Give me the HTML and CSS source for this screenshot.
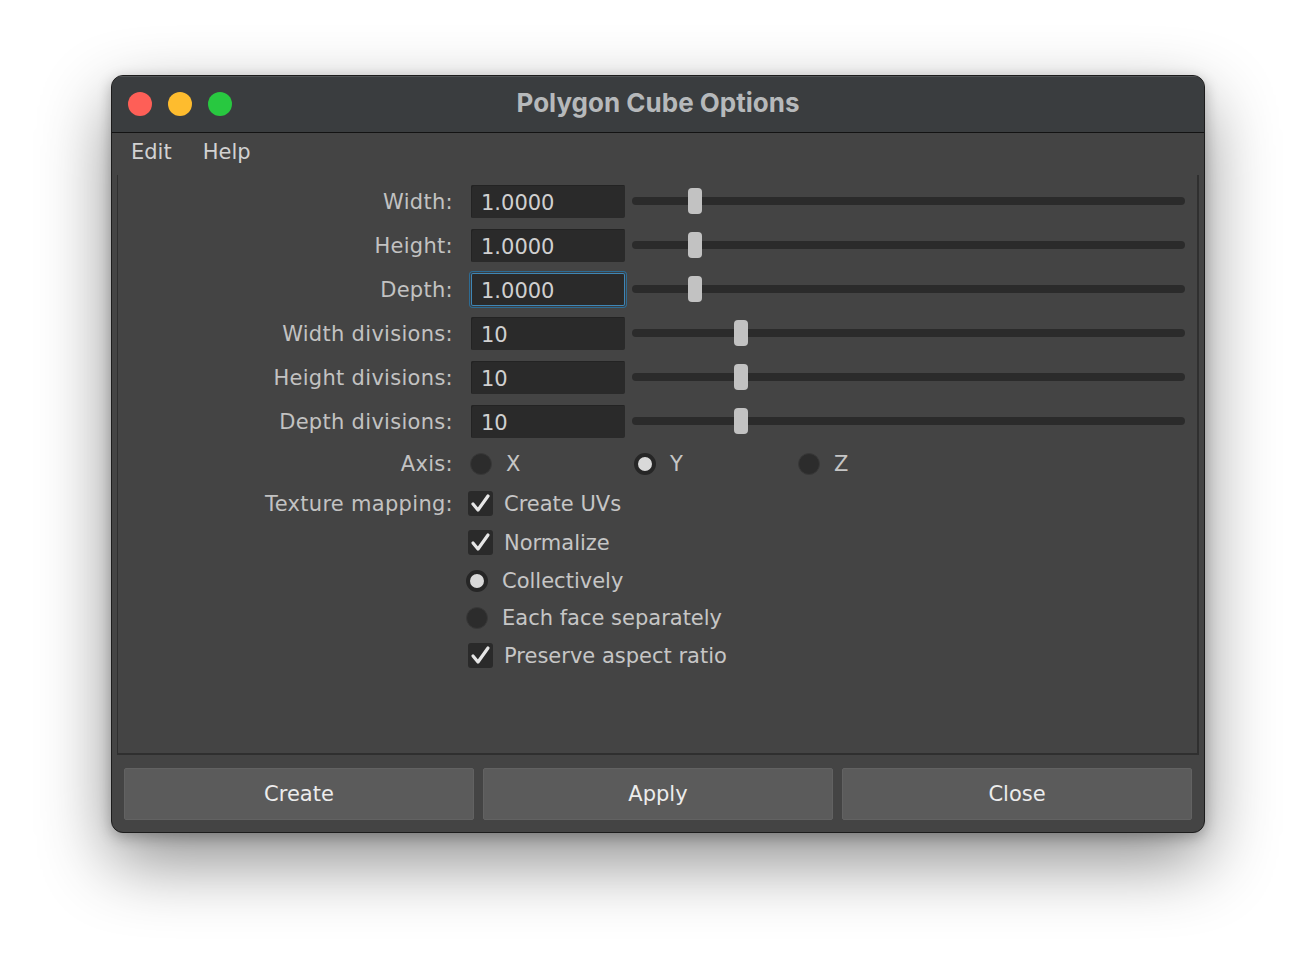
FILE: index.html
```html
<!DOCTYPE html>
<html>
<head>
<meta charset="utf-8">
<title>Polygon Cube Options</title>
<link rel="stylesheet" href="styles.css">
</head>
<body>
<div class="window">
  <div class="titlebar">
    <div class="lights">
      <span class="light red"></span>
      <span class="light yellow"></span>
      <span class="light green"></span>
    </div>
    <div class="title">Polygon Cube Options</div>
  </div>
  <div class="menubar">
    <span class="menu-item">Edit</span>
    <span class="menu-item">Help</span>
  </div>
  <div class="frame">
    <div class="row num-row">
      <div class="label">Width:</div>
      <div class="field">1.0000</div>
      <div class="slider"><div class="handle" style="left:56px"></div></div>
    </div>
    <div class="row num-row">
      <div class="label">Height:</div>
      <div class="field">1.0000</div>
      <div class="slider"><div class="handle" style="left:56px"></div></div>
    </div>
    <div class="row num-row">
      <div class="label">Depth:</div>
      <div class="field focused">1.0000</div>
      <div class="slider"><div class="handle" style="left:56px"></div></div>
    </div>
    <div class="row num-row">
      <div class="label">Width divisions:</div>
      <div class="field">10</div>
      <div class="slider"><div class="handle" style="left:102px"></div></div>
    </div>
    <div class="row num-row">
      <div class="label">Height divisions:</div>
      <div class="field">10</div>
      <div class="slider"><div class="handle" style="left:102px"></div></div>
    </div>
    <div class="row num-row">
      <div class="label">Depth divisions:</div>
      <div class="field">10</div>
      <div class="slider"><div class="handle" style="left:102px"></div></div>
    </div>
    <div class="row axis-row">
      <div class="label">Axis:</div>
      <div class="axis-options">
        <div class="axis-opt"><span class="radio"></span><span class="opt-text">X</span></div>
        <div class="axis-opt"><span class="radio on"></span><span class="opt-text">Y</span></div>
        <div class="axis-opt"><span class="radio"></span><span class="opt-text">Z</span></div>
      </div>
    </div>
    <div class="row tex-row">
      <div class="label tex-label">Texture mapping:</div>
      <div class="tex-options">
        <div class="opt check-opt"><span class="checkbox"><svg viewBox="0 0 25 25" width="25" height="25"><path d="M5 13 L10 19 L20 5" fill="none" stroke="#e6e6e6" stroke-width="3.2" stroke-linecap="round" stroke-linejoin="round"/></svg></span><span class="opt-text">Create UVs</span></div>
        <div class="opt check-opt"><span class="checkbox"><svg viewBox="0 0 25 25" width="25" height="25"><path d="M5 13 L10 19 L20 5" fill="none" stroke="#e6e6e6" stroke-width="3.2" stroke-linecap="round" stroke-linejoin="round"/></svg></span><span class="opt-text">Normalize</span></div>
        <div class="opt radio-opt"><span class="radio on"></span><span class="opt-text">Collectively</span></div>
        <div class="opt radio-opt"><span class="radio"></span><span class="opt-text">Each face separately</span></div>
        <div class="opt check-opt"><span class="checkbox"><svg viewBox="0 0 25 25" width="25" height="25"><path d="M5 13 L10 19 L20 5" fill="none" stroke="#e6e6e6" stroke-width="3.2" stroke-linecap="round" stroke-linejoin="round"/></svg></span><span class="opt-text">Preserve aspect ratio</span></div>
      </div>
    </div>
  </div>
  <div class="buttons">
    <div class="btn">Create</div>
    <div class="btn">Apply</div>
    <div class="btn">Close</div>
  </div>
</div>
</body>
</html>
```
FILE: styles.css
```css
* { box-sizing: border-box; }
html, body { margin: 0; padding: 0; background: #ffffff; }
body {
  min-height: 980px;
  padding: 75px 0 0 111px;
  font-family: "DejaVu Sans", "Liberation Sans", sans-serif;
  font-size: 21px;
}
.window {
  width: 1094px;
  height: 758px;
  border: 1px solid #1c1c1c;
  border-radius: 12px;
  overflow: hidden;
  background: #444444;
  display: flex;
  flex-direction: column;
  box-shadow: 0 28px 70px rgba(0,0,0,0.45), 0 4px 14px rgba(0,0,0,0.25);
}
.titlebar {
  height: 57px;
  flex: none;
  background: #3a3d3f;
  border-bottom: 1px solid #131313;
  display: flex;
  align-items: center;
  position: relative;
  box-shadow: inset 0 1px 0 rgba(255,255,255,0.12);
}
.lights {
  display: flex;
  gap: 16px;
  padding-left: 16px;
}
.light {
  width: 24px;
  height: 24px;
  border-radius: 50%;
  display: block;
}
.red { background: #fe5f57; }
.yellow { background: #febc2e; }
.green { background: #28c840; }
.title {
  position: absolute;
  left: 0;
  right: 0;
  top: 0;
  bottom: 0;
  display: flex;
  align-items: center;
  justify-content: center;
  font-family: "Inter", "Open Sans", sans-serif;
  font-weight: 700;
  font-size: 26px;
  color: #b6b9bb;
  padding-bottom: 3px;
}
.menubar {
  height: 42px;
  flex: none;
  display: flex;
  align-items: center;
  gap: 31px;
  padding-left: 19px;
  padding-bottom: 5px;
  color: #d2d2d2;
}
.frame {
  flex: 1;
  margin: 0 5px 0 5px;
  border-left: 1px solid #2f2f2f;
  border-right: 2px solid #2f2f2f;
  border-bottom: 2px solid #2f2f2f;
  padding: 4px 12px 0 0;
  display: flex;
  flex-direction: column;
  color: #c2c2c2;
}
.row {
  display: flex;
  align-items: center;
}
.label {
  width: 335px;
  flex: none;
  text-align: right;
  margin-right: 15px;
  letter-spacing: 0.3px;
  padding-top: 1px;
}
.num-row { height: 44px; }
.field {
  width: 154px;
  height: 33px;
  margin-left: 3px;
  background: #2a2a2a;
  border-radius: 2px;
  display: flex;
  align-items: center;
  padding-left: 10px;
  padding-top: 4px;
  color: #d0d0d0;
  box-shadow: inset 1px 1px 0 #232323;
}
.field.focused {
  box-shadow: inset 0 0 0 1px #3f86b5, 0 0 0 1px #3a3d40, 0 0 0 2px #2d6b93;
}
.slider {
  flex: 1;
  height: 8px;
  margin-left: 7px;
  background: #2b2b2b;
  border-radius: 4px;
  position: relative;
}
.handle {
  position: absolute;
  top: -9px;
  width: 14px;
  height: 26px;
  border-radius: 4px;
  background: #c2c2c2;
}
.axis-row { height: 41px; }
.axis-options { display: flex; }
.axis-opt {
  width: 164px;
  display: flex;
  align-items: center;
  padding-left: 2px;
}
.radio {
  width: 22px;
  height: 22px;
  border-radius: 50%;
  background: #2c2c2c;
  border: 1px solid #383838;
  flex: none;
  margin-right: 14px;
}
.radio.on {
  background: #d9d9d9;
  border: 4px solid #262626;
}
.opt-text { color: #c6c6c6; }
.tex-row { align-items: flex-start; }
.tex-label { height: 39px; line-height: 39px; }
.tex-options { display: flex; flex-direction: column; }
.opt { display: flex; align-items: center; }
.check-opt { height: 39px; }
.radio-opt { height: 37px; margin-left: -2px; }
.checkbox {
  width: 25px;
  height: 25px;
  border-radius: 3px;
  background: #2a2a2a;
  flex: none;
  margin-right: 11px;
  display: block;
}
.checkbox svg { display: block; }
.buttons {
  height: 77px;
  flex: none;
  display: flex;
  gap: 9px;
  padding: 13px 12px 12px 12px;
}
.btn {
  flex: 1;
  background: #5b5b5b;
  border: 1px solid #626262;
  border-radius: 2px;
  display: flex;
  align-items: center;
  justify-content: center;
  color: #ececec;
}
```
